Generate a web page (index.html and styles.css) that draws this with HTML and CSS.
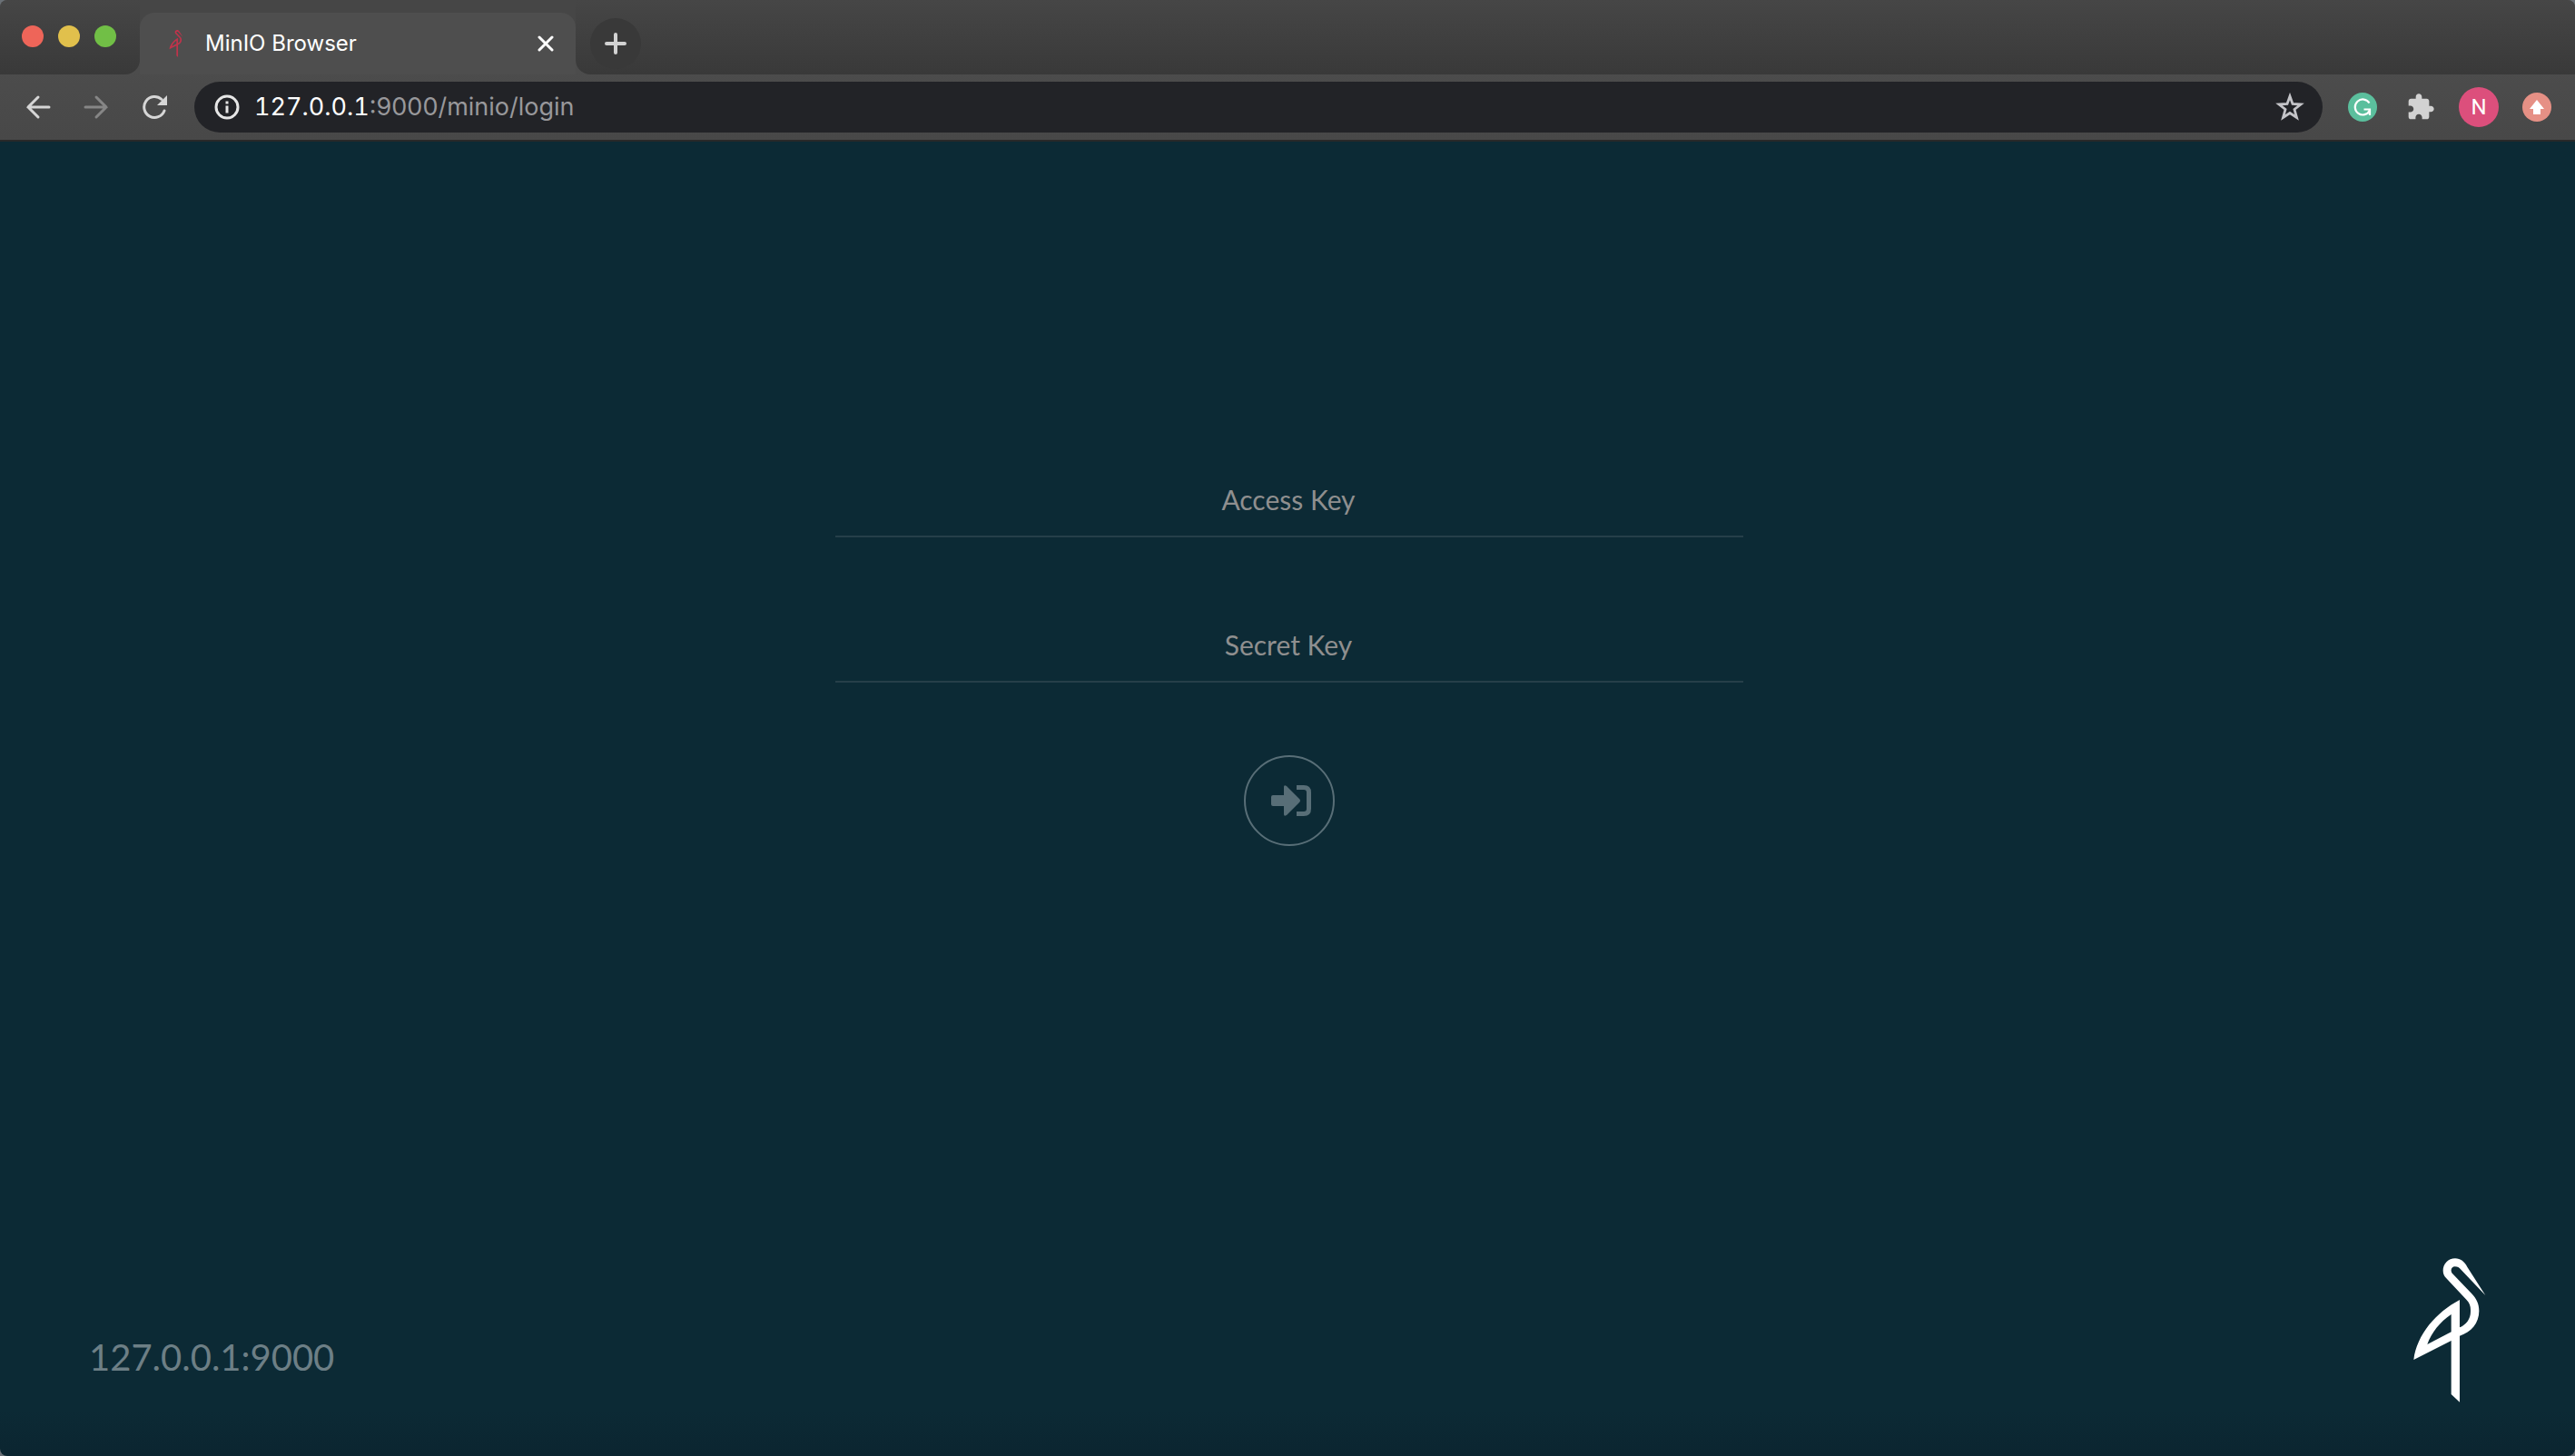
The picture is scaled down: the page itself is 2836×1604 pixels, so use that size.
FILE: index.html
```html
<!DOCTYPE html>
<html lang="en">
<head>
<meta charset="utf-8">
<title>MinIO Browser</title>
<link rel="stylesheet" href="styles.css">
</head>
<body>
<svg class="defs" aria-hidden="true">
  <symbol id="bird" viewBox="84 47 240 477">
    <path fill-rule="evenodd" d="M322 170L262 76C253 59 240 48 222 48C199 48 182 66 182 88C182 98 186 107 193 114L259 184C270 195 274 207 273 224C273 248 258 268 237 276V185C160 225 95 300 85 383L209 320V497L237 523V304C275 292 301 262 301 222C301 197 292 181 277 165L213 98C204 87 211 75 221 75C231 75 235 79 240 84ZM209 233C172 257 143 295 130 332L209 291Z"/>
  </symbol>
</svg>
<div class="window">
  <header class="chrome">
    <div class="tabstrip">
      <div class="strip-left">
        <button class="light light-close" aria-label="Close window"></button>
        <button class="light light-min" aria-label="Minimize window"></button>
        <button class="light light-max" aria-label="Zoom window"></button>
      </div>
      <div class="tab-slot">
        <div class="tab">
          <svg class="favicon" aria-hidden="true"><use href="#bird"/></svg>
          <span class="tab-title">MinIO Browser</span>
          <button class="tab-close" aria-label="Close tab"><svg width="18" height="18" viewBox="0 0 18 18"><path d="M2 2L16 16M16 2L2 16" fill="none" stroke="#fff" stroke-width="3" stroke-linecap="round"/></svg></button>
        </div>
      </div>
      <div class="strip-right">
        <button class="new-tab" aria-label="New tab"><svg width="24" height="24" viewBox="0 0 24 24"><path d="M12 2V22M2 12H22" fill="none" stroke="#d2d2d2" stroke-width="4" stroke-linecap="round"/></svg></button>
      </div>
    </div>
    <div class="toolbar">
      <nav class="nav">
        <button class="icon-btn" aria-label="Back"><svg width="28" height="28" viewBox="0 0 28 28"><path d="M26 14H3M14 3L3 14L14 25" fill="none" stroke="#d6d6d6" stroke-width="3" stroke-linecap="round"/></svg></button>
        <button class="icon-btn" aria-label="Forward"><svg width="28" height="28" viewBox="0 0 28 28"><path d="M2 14H25M14 3L25 14L14 25" fill="none" stroke="#868686" stroke-width="3" stroke-linecap="round"/></svg></button>
        <button class="icon-btn" aria-label="Reload"><svg width="28" height="28" viewBox="0 0 28 28"><path d="M25 18A11.500 11.500 0 1 1 22 5.500" fill="none" stroke="#d6d6d6" stroke-width="3" stroke-linecap="round"/><path d="M28 1V12H17Z" fill="#d6d6d6"/></svg></button>
      </nav>
      <div class="omnibox">
        <svg width="28" height="28" viewBox="0 0 28 28" aria-hidden="true"><circle cx="14" cy="14" r="12" fill="none" stroke="#e6e6e6" stroke-width="3"/><path d="M12.500 7.500h3v3h-3zM12.500 12.500h3v8h-3z" fill="#e6e6e6"/></svg>
        <div class="url" role="textbox" aria-label="Address" contenteditable="true" spellcheck="false"><span class="host">127.0.0.1</span>:9000/minio/login</div>
        <button class="icon-btn" aria-label="Bookmark this page"><svg width="32" height="32" viewBox="0 0 32 32"><path d="M16 4L19 12.500L28 13L21 18.500L23.500 27.500L16 22.500L8.500 27.500L11 18.500L4 13L13 12.500Z" fill="none" stroke="#c4c4c8" stroke-width="2.800"/></svg></button>
      </div>
      <div class="extensions">
        <button class="icon-btn" aria-label="Grammar checker"><svg width="32" height="32" viewBox="0 0 32 32"><circle cx="16" cy="16" r="16" fill="#5bbf9d"/><path d="M23.500 11.500A8.500 8.500 0 1 0 24 19.500M17.500 18.500H24V25" fill="none" stroke="#fff" stroke-width="2.200"/></svg></button>
        <button class="icon-btn" aria-label="Extensions"><svg width="32" height="32" viewBox="0 0 24 24"><path d="M20.500 11H19V7c0-1.100-.9-2-2-2h-4V3.500C13 2.120 11.880 1 10.500 1S8 2.120 8 3.500V5H4c-1.100 0-1.990.9-1.990 2v3.800H3.500c1.490 0 2.700 1.210 2.700 2.700s-1.210 2.700-2.700 2.700H2V20c0 1.100.9 2 2 2h3.800v-1.500c0-1.490 1.210-2.700 2.700-2.700s2.700 1.210 2.700 2.700V22H17c1.100 0 2-.9 2-2v-4h1.500c1.380 0 2.500-1.120 2.500-2.500S21.880 11 20.500 11z" fill="#d2d2d2"/></svg></button>
        <button class="avatar" aria-label="Profile">N</button>
        <button class="icon-btn" aria-label="Update"><svg width="32" height="32" viewBox="0 0 32 32"><circle cx="16" cy="16" r="16" fill="#e69085"/><path d="M16 8L24 18H20V24H12V18H8Z" fill="#fff"/></svg></button>
      </div>
    </div>
  </header>
  <div class="page">
    <main class="login">
      <form class="login-form">
        <input class="field" type="text" placeholder="Access Key" aria-label="Access Key">
        <input class="field" type="password" placeholder="Secret Key" aria-label="Secret Key">
        <button class="submit" type="submit" aria-label="Log in"><svg width="44" height="36" viewBox="0 0 44 36"><path d="M0 14Q0 12 2 12H14V3Q14 0 17 2L31 16Q33 18 31 20L17 34Q14 36 14 33V24H2Q0 24 0 22Z"/><path d="M28 3.500H36Q41.500 3.500 41.500 9V27Q41.500 32.500 36 32.500H28" fill="none" stroke="#586e77" stroke-width="5"/></svg></button>
      </form>
    </main>
    <footer class="footer">
      <a class="server" href="#">127.0.0.1:9000</a>
      <svg class="logo" role="img" aria-label="MinIO"><use href="#bird"/></svg>
    </footer>
  </div>
</div>
</body>
</html>
```
FILE: styles.css
```css
* { box-sizing: border-box; }

body {
  margin: 0;
  background: #6a7076;
  font-family: Inter, "Liberation Sans", sans-serif;
}

button {
  display: flex;
  align-items: center;
  justify-content: center;
  padding: 0;
  border: 0;
  background: none;
  flex: none;
}

svg { display: block; flex: none; }

.defs { position: absolute; width: 0; height: 0; }

.window {
  display: flex;
  flex-direction: column;
  min-height: 100vh;
  border-radius: 8px;
  overflow: hidden;
}

/* Tab strip */
.chrome { background: linear-gradient(#505050, #484848); border-bottom: 2px solid #292929; }

.tabstrip { display: flex; height: 82px; }

.strip-left,
.strip-right {
  display: flex;
  background: linear-gradient(#464646, #393939);
}

.strip-left {
  width: 154px;
  gap: 16px;
  padding: 28px 0 0 24px;
  border-bottom-right-radius: 16px;
}

.strip-right {
  flex: 1;
  padding: 20px 0 0 16px;
  border-bottom-left-radius: 16px;
}

.tab-slot { width: 480px; padding-top: 14px; background: linear-gradient(#464646 0 50%, transparent 50%); }

.tab {
  display: flex;
  align-items: center;
  height: 68px;
  padding: 0 24px 0 32px;
  border-radius: 16px 16px 0 0;
  background: #4e4e4e;
}

.light { width: 24px; height: 24px; border-radius: 50%; }
.light-close { background: #ee6559; }
.light-min { background: #e1c04c; }
.light-max { background: #71bf46; }

.favicon { width: 16px; height: 30px; fill: #c0334b; }

.tab-title {
  flex: 1;
  padding-left: 24px;
  font-size: 24px;
  line-height: 32px;
  color: #fff;
}

.new-tab { width: 56px; height: 56px; border-radius: 50%; background: #393939; }

/* Toolbar */
.toolbar {
  display: flex;
  align-items: center;
  gap: 28px;
  height: 72px;
  padding: 0 26px 0 28px;
}

.nav { display: flex; gap: 36px; padding-right: 2px; }

.omnibox {
  display: flex;
  flex: 1;
  align-items: center;
  height: 56px;
  padding: 0 20px 0 22px;
  border-radius: 28px;
  background: #222327;
}

.url {
  flex: 1;
  padding-left: 16px;
  font-size: 27px;
  line-height: 36px;
  color: #98989b;
  outline: none;
}

.host { color: #fff; font-variant-numeric: tabular-nums; }

.extensions { display: flex; align-items: center; gap: 32px; }

.avatar {
  width: 44px;
  height: 44px;
  margin: 0 -6px;
  border-radius: 50%;
  background: #dc4f7c;
  color: #fff;
  font: 24px Roboto, sans-serif;
}

/* Login page */
.page {
  display: flex;
  flex: 1;
  flex-direction: column;
  background: linear-gradient(to top, #0b2530, #0c2a35 50px);
  font-family: Lato, sans-serif;
}

.login { flex: 1; padding: 354px 0 80px 4px; }

.login-form {
  display: flex;
  flex-direction: column;
  align-items: center;
  max-width: 1000px;
  margin: 0 auto;
}

.field {
  width: 100%;
  height: 82px;
  margin-bottom: 78px;
  padding: 0 2px 0 0;
  border: 0;
  border-bottom: 2px solid #263f49;
  background: none;
  color: #fff;
  font: 30px Lato, sans-serif;
  text-align: center;
  outline: none;
}

.field::placeholder { color: #8f8f8f; opacity: 1; }

.submit {
  width: 100px;
  height: 100px;
  margin-top: 2px;
  padding-left: 4px;
  border: 2px solid #586e77;
  border-radius: 50%;
  fill: #586e77;
}

.footer {
  display: flex;
  align-items: flex-end;
  justify-content: space-between;
  padding: 0 98px 59px;
}

.server {
  font-size: 40px;
  line-height: 100px;
  color: #6d7f86;
  text-decoration: none;
}

.logo { width: 80px; height: 159px; fill: #fff; }
```
